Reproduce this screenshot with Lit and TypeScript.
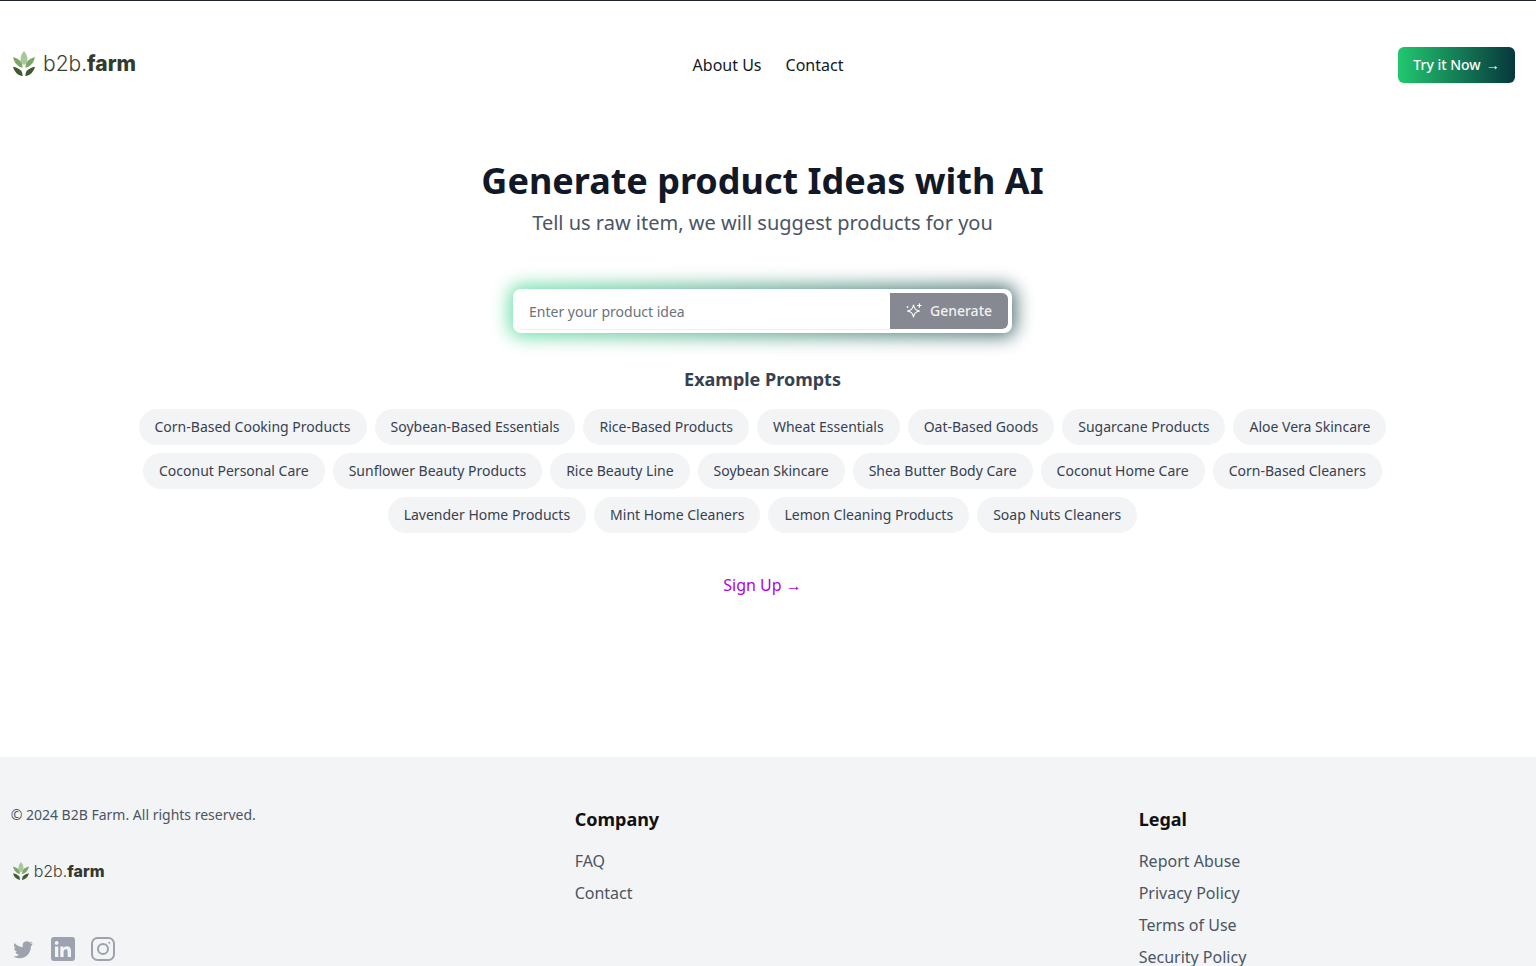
import { LitElement, html, css, svg } from "lit";
import { customElement } from "lit/decorators.js";

const chips = [
  ["Corn-Based Cooking Products","Soybean-Based Essentials","Rice-Based Products","Wheat Essentials","Oat-Based Goods","Sugarcane Products","Aloe Vera Skincare"],
  ["Coconut Personal Care","Sunflower Beauty Products","Rice Beauty Line","Soybean Skincare","Shea Butter Body Care","Coconut Home Care","Corn-Based Cleaners"],
  ["Lavender Home Products","Mint Home Cleaners","Lemon Cleaning Products","Soap Nuts Cleaners"],
].flat();

const leafMark = svg`
  <path fill="#a8c79a" d="M12 0C15 3 16 6 15.700 8.500 15.400 11 14 12.500 12 13.500 10 12.500 8.600 11 8.300 8.500 8 6 9 3 12 0z"/>
  <path fill="#7fa667" d="M0 6C3 6.500 7 8 9 10.500 10 12 10.500 14 10.500 16 6 15.500 1.500 12 0 6z"/>
  <path fill="#7fa667" d="M24 6C21 6.500 17 8 15 10.500 14 12 13.500 14 13.500 16 18 15.500 22.500 12 24 6z"/>
  <path fill="#3f5a2e" d="M0 15C3.500 15.500 7 17 9 19 10 20.500 10.500 22 10.500 24 6 23.500 1.500 20.500 0 15z"/>
  <path fill="#3f5a2e" d="M24 15C20.500 15.500 17 17 15 19 14 20.500 13.500 22 13.500 24 18 23.500 22.500 20.500 24 15z"/>
`;

@customElement("app-root")
export class AppRoot extends LitElement {
  static styles = css`
    :host { display: block; font-family: "Noto Sans", sans-serif; color: #111827; background: #fff; height: 966px; overflow: hidden; }
    * { box-sizing: border-box; }
    .topline { height: 1px; background: #1f2430; }
    header { display: grid; grid-template-columns: 1fr auto 1fr; align-items: center; padding: 44px 21px 0; height: 83px; }
    .logo { display: flex; align-items: center; color: #3b4234; font-family: "Inter", sans-serif; line-height: 1; }
    .logo svg { display: block; flex: none; }
    .logo b { font-weight: 800; color: #333a2c; }
    .logo span { font-weight: 300; }
    .logo.big { margin-left: -8px; margin-top: -3px; gap: 8px; font-size: 21px; }
    .logo.small { gap: 5px; font-size: 16px; margin-left: 2px; }
    nav { display: flex; gap: 24px; font-size: 16px; line-height: 24px; }
    nav a { color: #111827; }
    .try { justify-self: end; width: 117px; height: 36px; border-radius: 6px; display: flex; align-items: center; justify-content: center; gap: 5px; color: #fff; font-size: 14px; font-weight: 500; background: linear-gradient(90deg, #22c76f, #07373c); box-shadow: 0 1px 2px rgba(0,0,0,.08); }
    main { width: 1525px; display: flex; flex-direction: column; align-items: center; }
    h1 { margin: 73px 0 0; font-size: 36px; line-height: 48px; font-weight: 700; color: #111827; }
    .sub { margin: 4px 0 0; font-size: 20px; line-height: 28px; color: #4b5563; }
    .search { position: relative; margin-top: 52px; width: 499px; height: 44px; }
    .glow { position: absolute; inset: -4px; border-radius: 12px; background: linear-gradient(90deg, #35d58a, #0b3a40); filter: blur(9px); opacity: .7; }
    .box { position: relative; height: 100%; background: #fff; border-radius: 8px; display: flex; align-items: center; padding: 4px; }
    .ph { flex: 1; height: 36px; line-height: 38px; padding-left: 12px; font-size: 14px; color: #6b7280; border-radius: 6px 0 0 6px; box-shadow: 0 1px 1px rgba(0,0,0,.07); }
    .gen { width: 118px; height: 36px; padding-bottom: 2px; background: #878992; border-radius: 0 6px 6px 0; color: rgba(255,255,255,.9); font-size: 14px; font-weight: 500; display: flex; align-items: center; justify-content: center; gap: 8px; }
    .gen svg { display: block; margin-top: 2px; }
    h2 { margin: 32px 0 0; font-size: 18px; line-height: 28px; font-weight: 700; color: #374151; }
    .chips { margin-top: 16px; width: 1280px; display: flex; flex-wrap: wrap; justify-content: center; gap: 8px; }
    .chip { height: 36px; padding: 0 16px; border-radius: 18px; background: #f3f4f6; font-size: 14px; line-height: 36px; color: #374151; white-space: nowrap; }
    .signup { margin-top: 40px; font-size: 16px; line-height: 24px; color: #b100e8; }
    footer { margin-top: 160px; background: #f3f4f6; height: 300px; padding: 46px 0 0 10.670px; display: grid; grid-template-columns: 564px 564px 1fr; }
    .copy { font-size: 14px; line-height: 24px; color: #4b5563; }
    .col1 .logo { margin-top: 35px; }
    .social { margin-top: 57px; display: flex; gap: 16px; color: #9ca3af; }
    .social svg { display: block; }
    h3 { margin: 4px 0 0; font-size: 18px; line-height: 24px; font-weight: 700; color: #111; }
    .links { margin-top: 18px; display: flex; flex-direction: column; gap: 8px; font-size: 16px; line-height: 24px; color: #4b5563; }
  `;

  render() {
    return html`
      <div class="topline"></div>
      <header>
        <div class="logo big">
          <svg width="22" height="25" viewBox="0 0 24 24" preserveAspectRatio="none">${leafMark}</svg>
          <div><span>b2b.</span><b>farm</b></div>
        </div>
        <nav><a>About Us</a><a>Contact</a></nav>
        <div class="try">Try it Now <span>→</span></div>
      </header>
      <main>
        <h1>Generate product Ideas with AI</h1>
        <p class="sub">Tell us raw item, we will suggest products for you</p>
        <div class="search">
          <div class="glow"></div>
          <div class="box">
            <div class="ph">Enter your product idea</div>
            <div class="gen">
              <svg width="16" height="16" viewBox="0 0 16 16" fill="none" stroke="#fff" stroke-width="1.200" stroke-linecap="round" stroke-linejoin="round">
                <path d="M7.500 2c.7 4 2 5.300 6 6-4 .7-5.300 2-6 6-.7-4-2-5.300-6-6 4-.7 5.300-2 6-6z"/>
                <path d="M13.400 .8v3.400M11.700 2.500h3.400"/>
                <path d="M1.500 3.500v.8M1.100 3.900h.8"/>
              </svg>
              Generate
            </div>
          </div>
        </div>
        <h2>Example Prompts</h2>
        <div class="chips">${chips.map((c) => html`<div class="chip">${c}</div>`)}</div>
        <div class="signup">Sign Up <span>→</span></div>
      </main>
      <footer>
        <div class="col1">
          <div class="copy">© 2024 B2B Farm. All rights reserved.</div>
          <div class="logo small">
            <svg width="16" height="18" viewBox="0 0 24 24" preserveAspectRatio="none">${leafMark}</svg>
            <div><span>b2b.</span><b>farm</b></div>
          </div>
          <div class="social">
            <svg width="24" height="24" viewBox="-1.500 -1.500 27 27" fill="currentColor"><path d="M23 5.500c-.8.400-1.700.600-2.600.700.900-.600 1.600-1.400 2-2.500-.900.500-1.800.900-2.900 1.100A4.500 4.500 0 0 0 11.800 9c0 .4 0 .7.100 1C8.200 9.800 4.800 8 2.500 5.300 1.300 7.400 1.900 10 3.900 11.300c-.7 0-1.400-.2-2-.6 0 2.200 1.500 4 3.600 4.500-.7.200-1.400.2-2 .1.600 1.800 2.300 3.100 4.200 3.100A9.100 9.100 0 0 1 1 20.300 12.800 12.800 0 0 0 8 22.300c8.400 0 13.200-7.100 12.900-13.500.9-.7 1.600-1.500 2.100-3.300z"/></svg>
            <svg width="24" height="24" viewBox="0 0 24 24"><rect width="24" height="24" rx="3" fill="currentColor"/><path fill="#f3f4f6" d="M4 9.500h3.300V20H4zM5.650 4a1.900 1.900 0 1 1 0 3.800 1.900 1.900 0 0 1 0-3.800zM9.300 9.500h3.100V11c.5-.9 1.700-1.800 3.400-1.800 3.500 0 4.200 2.300 4.200 5.300V20h-3.300v-4.900c0-1.200 0-2.800-1.700-2.800s-2.400 1.300-2.400 2.700v5H9.300z"/></svg>
            <svg width="24" height="24" viewBox="0 0 24 24" fill="none" stroke="currentColor" stroke-width="2"><rect x="1" y="1" width="22" height="22" rx="5.500"/><circle cx="12" cy="12" r="5"/><circle cx="18.300" cy="5.700" r="1" fill="currentColor" stroke="none"/></svg>
          </div>
        </div>
        <div>
          <h3>Company</h3>
          <div class="links"><a>FAQ</a><a>Contact</a></div>
        </div>
        <div>
          <h3>Legal</h3>
          <div class="links"><a>Report Abuse</a><a>Privacy Policy</a><a>Terms of Use</a><a>Security Policy</a></div>
        </div>
      </footer>
    `;
  }
}
